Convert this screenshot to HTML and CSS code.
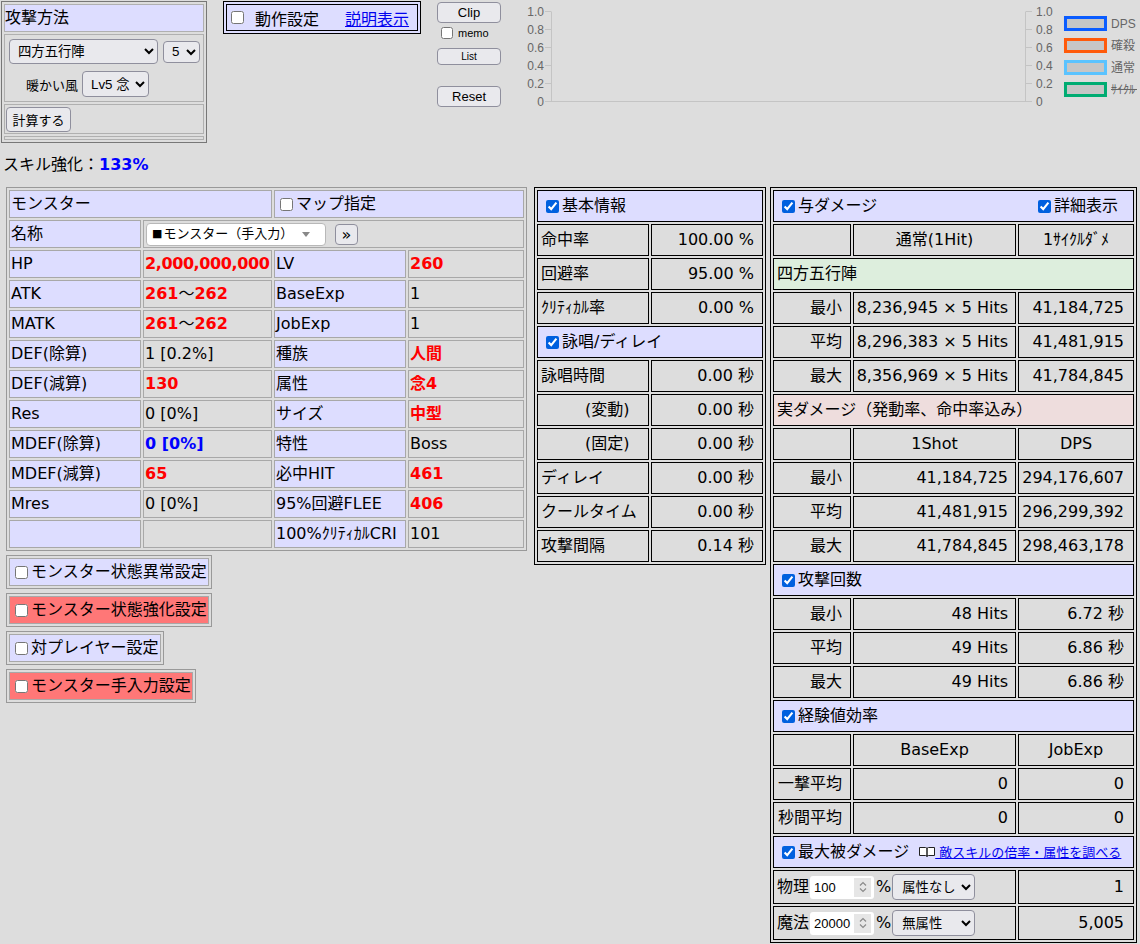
FILE: index.html
```html
<!DOCTYPE html>
<html lang="ja">
<head>
<meta charset="UTF-8">
<meta name="viewport" content="width=device-width, initial-scale=1.0">
<title>ダメージ計算</title>
<link rel="stylesheet" href="styles.css">
</head>
<body>

<div class="top">
    <table class="atk">
        <tr class="r-head"><td class="lav">攻撃方法</td></tr>
        <tr class="r-skill">
            <td class="skill-cell">
                <div class="skill-line">
                    <select class="sel sel-skill"><option>四方五行陣</option></select>
                    <select class="sel sel-lv"><option>5</option></select>
                </div>
                <div class="skill-line sub">
                    <span class="small">暖かい風</span>
                    <select class="sel sel-opt"><option>Lv5 念</option></select>
                </div>
            </td>
        </tr>
        <tr class="r-calc"><td><button class="btn btn-calc" type="button">計算する</button></td></tr>
        <tr class="r-blank"><td></td></tr>
    </table>

    <div class="setting-box">
        <div class="setting-inner">
            <input type="checkbox"><span class="setting-label">動作設定</span><a href="#" class="help-link">説明表示</a>
        </div>
    </div>

    <div class="tools">
        <button class="btn btn-clip" type="button">Clip</button>
        <label class="memo"><input type="checkbox">memo</label>
        <button class="btn btn-list" type="button">List</button>
        <button class="btn btn-reset" type="button">Reset</button>
    </div>

    <svg class="chart" width="620" height="110" viewBox="0 0 620 110">
        <g class="axis">
            <line x1="31.5" y1="11.5" x2="31.5" y2="102"/>
            <line x1="31" y1="101.5" x2="506" y2="101.5"/>
            <line x1="505.5" y1="11.5" x2="505.5" y2="102"/>
            <line x1="25" y1="11.5" x2="31" y2="11.5"/>
            <line x1="25" y1="29.5" x2="31" y2="29.5"/>
            <line x1="25" y1="47.5" x2="31" y2="47.5"/>
            <line x1="25" y1="65.5" x2="31" y2="65.5"/>
            <line x1="25" y1="83.5" x2="31" y2="83.5"/>
            <line x1="25" y1="101.5" x2="31" y2="101.5"/>
            <line x1="506" y1="11.5" x2="512" y2="11.5"/>
            <line x1="506" y1="29.5" x2="512" y2="29.5"/>
            <line x1="506" y1="47.5" x2="512" y2="47.5"/>
            <line x1="506" y1="65.5" x2="512" y2="65.5"/>
            <line x1="506" y1="83.5" x2="512" y2="83.5"/>
            <line x1="506" y1="101.5" x2="512" y2="101.5"/>
        </g>
        <g class="tick tick-l">
            <text x="24" y="16">1.0</text>
            <text x="24" y="34">0.8</text>
            <text x="24" y="52">0.6</text>
            <text x="24" y="70">0.4</text>
            <text x="24" y="88">0.2</text>
            <text x="24" y="106">0</text>
        </g>
        <g class="tick">
            <text x="516" y="16">1.0</text>
            <text x="516" y="34">0.8</text>
            <text x="516" y="52">0.6</text>
            <text x="516" y="70">0.4</text>
            <text x="516" y="88">0.2</text>
            <text x="516" y="106">0</text>
        </g>
        <g class="legend">
            <rect x="545.5" y="17.5" width="40" height="12" stroke="#0a5cff"/>
            <rect x="545.5" y="39.5" width="40" height="12" stroke="#ff5a0a"/>
            <rect x="545.5" y="61.5" width="40" height="12" stroke="#5ac3ff"/>
            <rect x="545.5" y="83.5" width="40" height="12" stroke="#00ac72"/>
            <text x="591" y="28">DPS</text>
            <text x="591" y="50">確殺</text>
            <text x="591" y="72">通常</text>
            <text x="591" y="94">ｻｲｸﾙ</text>
            <line class="strike" x1="591" y1="89.5" x2="617" y2="89.5"/>
        </g>
    </svg>
</div>

<div class="skill-up">スキル強化：<b class="blue">133%</b></div>

<div class="main">
    <div class="left">
        <table class="mon">
            <colgroup><col class="mc1"><col class="mc2"><col class="mc3"><col class="mc4"></colgroup>
            <tr><td colspan="2" class="lav">モンスター</td><td colspan="2" class="lav"><input type="checkbox">マップ指定</td></tr>
            <tr>
                <td class="lav">名称</td>
                <td colspan="3">
                    <span class="mon-select"><span class="sq">■</span>モンスター（手入力）<span class="tri"></span></span><button class="btn btn-more" type="button">»</button>
                </td>
            </tr>
            <tr><td class="lav">HP</td><td><b class="red tight">2,000,000,000</b></td><td class="lav">LV</td><td><b class="red">260</b></td></tr>
            <tr><td class="lav">ATK</td><td><b class="red">261</b>～<b class="red">262</b></td><td class="lav">BaseExp</td><td>1</td></tr>
            <tr><td class="lav">MATK</td><td><b class="red">261</b>～<b class="red">262</b></td><td class="lav">JobExp</td><td>1</td></tr>
            <tr><td class="lav">DEF(除算)</td><td>1 [0.2%]</td><td class="lav">種族</td><td><b class="red">人間</b></td></tr>
            <tr><td class="lav">DEF(減算)</td><td><b class="red">130</b></td><td class="lav">属性</td><td><b class="red">念4</b></td></tr>
            <tr><td class="lav">Res</td><td>0 [0%]</td><td class="lav">サイズ</td><td><b class="red">中型</b></td></tr>
            <tr><td class="lav">MDEF(除算)</td><td><b class="blue">0 [0%]</b></td><td class="lav">特性</td><td>Boss</td></tr>
            <tr><td class="lav">MDEF(減算)</td><td><b class="red">65</b></td><td class="lav">必中HIT</td><td><b class="red">461</b></td></tr>
            <tr><td class="lav">Mres</td><td>0 [0%]</td><td class="lav">95%回避FLEE</td><td><b class="red">406</b></td></tr>
            <tr><td class="lav"></td><td></td><td class="lav">100%ｸﾘﾃｨｶﾙCRI</td><td>101</td></tr>
        </table>

        <table class="opt"><tr><td class="lav"><input type="checkbox">モンスター状態異常設定</td></tr></table>
        <table class="opt"><tr><td class="alert"><input type="checkbox">モンスター状態強化設定</td></tr></table>
        <table class="opt"><tr><td class="lav"><input type="checkbox">対プレイヤー設定</td></tr></table>
        <table class="opt"><tr><td class="alert"><input type="checkbox">モンスター手入力設定</td></tr></table>
    </div>

    <table class="info mid">
        <colgroup><col class="w112"><col class="w112"></colgroup>
        <tr><td colspan="2" class="lav hd"><input type="checkbox" checked>基本情報</td></tr>
        <tr><td>命中率</td><td class="num">100.00 %</td></tr>
        <tr><td>回避率</td><td class="num">95.00 %</td></tr>
        <tr><td>ｸﾘﾃｨｶﾙ率</td><td class="num">0.00 %</td></tr>
        <tr><td colspan="2" class="lav hd"><input type="checkbox" checked>詠唱/ディレイ</td></tr>
        <tr><td>詠唱時間</td><td class="num">0.00 秒</td></tr>
        <tr><td class="ind">(変動)</td><td class="num">0.00 秒</td></tr>
        <tr><td class="ind">(固定)</td><td class="num">0.00 秒</td></tr>
        <tr><td>ディレイ</td><td class="num">0.00 秒</td></tr>
        <tr><td>クールタイム</td><td class="num">0.00 秒</td></tr>
        <tr><td>攻撃間隔</td><td class="num">0.14 秒</td></tr>
    </table>

    <table class="info dmg">
        <colgroup><col class="dc1"><col class="dc2"><col class="dc3"></colgroup>
        <tr>
            <td colspan="3" class="lav hd">
                <div class="split">
                    <span><input type="checkbox" checked>与ダメージ</span>
                    <span><input type="checkbox" checked>詳細表示</span>
                </div>
            </td>
        </tr>
        <tr><td></td><td class="c">通常(1Hit)</td><td class="c">1ｻｲｸﾙﾀﾞﾒ</td></tr>
        <tr><td colspan="3" class="green">四方五行陣</td></tr>
        <tr><td class="num">最小</td><td class="num n2">8,236,945 × 5 Hits</td><td class="num n3">41,184,725</td></tr>
        <tr><td class="num">平均</td><td class="num n2">8,296,383 × 5 Hits</td><td class="num n3">41,481,915</td></tr>
        <tr><td class="num">最大</td><td class="num n2">8,356,969 × 5 Hits</td><td class="num n3">41,784,845</td></tr>
        <tr><td colspan="3" class="pink">実ダメージ（発動率、命中率込み）</td></tr>
        <tr><td></td><td class="c">1Shot</td><td class="c">DPS</td></tr>
        <tr><td class="num">最小</td><td class="num n2">41,184,725</td><td class="num n3">294,176,607</td></tr>
        <tr><td class="num">平均</td><td class="num n2">41,481,915</td><td class="num n3">296,299,392</td></tr>
        <tr><td class="num">最大</td><td class="num n2">41,784,845</td><td class="num n3">298,463,178</td></tr>
        <tr><td colspan="3" class="lav hd"><input type="checkbox" checked>攻撃回数</td></tr>
        <tr><td class="num">最小</td><td class="num n2">48 Hits</td><td class="num n3">6.72 秒</td></tr>
        <tr><td class="num">平均</td><td class="num n2">49 Hits</td><td class="num n3">6.86 秒</td></tr>
        <tr><td class="num">最大</td><td class="num n2">49 Hits</td><td class="num n3">6.86 秒</td></tr>
        <tr><td colspan="3" class="lav hd"><input type="checkbox" checked>経験値効率</td></tr>
        <tr><td></td><td class="c">BaseExp</td><td class="c">JobExp</td></tr>
        <tr><td class="num">一撃平均</td><td class="num n2">0</td><td class="num n3">0</td></tr>
        <tr><td class="num">秒間平均</td><td class="num n2">0</td><td class="num n3">0</td></tr>
        <tr>
            <td colspan="3" class="lav hd">
                <input type="checkbox" checked>最大被ダメージ<a href="#" class="skill-link"><svg class="book" width="16" height="10" viewBox="0 0 16 10"><path d="M0.5 0.5H6.5Q8 0.5 8 2V9.5Q8 8.5 6.5 8.5H0.5Z M15.5 0.5H9.5Q8 0.5 8 2V9.5Q8 8.5 9.5 8.5H15.5Z" fill="#fff" stroke="#222" stroke-width="1"/></svg> 敵スキルの倍率・属性を調べる</a>
            </td>
        </tr>
        <tr class="r-in">
            <td colspan="2" class="in-cell">物理<span class="num-box"><input class="num-in" type="text" value="100"><span class="spin"><svg width="8" height="14" viewBox="0 0 8 14"><path d="M1 5.5L4 2.5L7 5.5M1 8.5L4 11.5L7 8.5" fill="none" stroke="#8a8a8a" stroke-width="1.2"/></svg></span></span><span class="pct">%</span><select class="sel sel-elem"><option>属性なし</option></select></td>
            <td class="num n3">1</td>
        </tr>
        <tr class="r-in">
            <td colspan="2" class="in-cell">魔法<span class="num-box"><input class="num-in" type="text" value="20000"><span class="spin"><svg width="8" height="14" viewBox="0 0 8 14"><path d="M1 5.5L4 2.5L7 5.5M1 8.5L4 11.5L7 8.5" fill="none" stroke="#8a8a8a" stroke-width="1.2"/></svg></span></span><span class="pct">%</span><select class="sel sel-elem"><option>無属性</option></select></td>
            <td class="num n3">5,005</td>
        </tr>
    </table>
</div>

</body>
</html>
```

FILE: styles.css
```css
body {
    margin: 0;
    background-color: #dddddd;
    font-family: "DejaVu Sans", "Noto Sans CJK JP", sans-serif;
    font-size: 16px;
    color: #000;
}

table {
    border-collapse: separate;
    border-spacing: 2px;
}

td {
    padding: 0 1px;
    white-space: nowrap;
}

.lav {
    background-color: #ddddff;
}

.green {
    background-color: #ddeedd;
}

.pink {
    background-color: #eedddd;
}

.alert {
    background-color: #ff7777;
}

.red {
    color: #ff0000;
}

.blue {
    color: #0000ff;
}

.tight {
    letter-spacing: -0.4px;
}

input[type="checkbox"] {
    width: 13px;
    height: 13px;
    margin: 0 3px 0 4px;
    vertical-align: middle;
    accent-color: #0060df;
}

.sel,
.btn,
.num-in {
    font-family: "Liberation Sans", "Noto Sans CJK JP", sans-serif;
    color: #000;
}

.sel {
    font-size: 13.33px;
    background-color: #e9e9ed;
    border: 1px solid #8f8f9d;
    border-radius: 4px;
    padding: 0 0 0 4px;
}

.btn {
    font-size: 13px;
    background-color: #e9e9ed;
    border: 1px solid #8f8f9d;
    border-radius: 4px;
    padding: 0;
    cursor: pointer;
}

/* top area */
.top {
    display: flex;
    align-items: flex-start;
}

.atk {
    width: 206px;
    margin: 1px 0 0 1px;
    border: 1px solid #777;
    table-layout: fixed;
}

.atk td {
    border: 1px solid #b0b0b0;
    padding: 0;
}

.atk .r-head {
    height: 28px;
}

.atk .r-head td {
    line-height: 24px;
}

.atk .r-skill {
    height: 68px;
}

.atk .r-calc {
    height: 30px;
}

.atk .r-blank {
    height: 4px;
}

.skill-cell {
    vertical-align: top;
}

.skill-line {
    display: flex;
    align-items: center;
    gap: 5px;
    margin-top: 4px;
    padding-left: 4px;
}

.skill-line.sub {
    margin-top: 7px;
    padding-left: 21px;
    gap: 4px;
}

.small {
    font-size: 13px;
}

.sel-skill {
    width: 149px;
    height: 25px;
}

.sel-lv {
    width: 37px;
    height: 22px;
}

.sel-opt {
    width: 67px;
    height: 26px;
}

.btn-calc {
    width: 65px;
    height: 25px;
    margin-left: 1px;
    font-family: "DejaVu Sans", "Noto Sans CJK JP", sans-serif;
}

.setting-box {
    margin: 1px 0 0 16px;
    border: 1px solid #000;
    padding: 2px;
    background-color: #ddddff;
}

.setting-inner {
    display: flex;
    align-items: center;
    height: 25px;
    padding-right: 8px;
    border: 1px solid #000;
    background-color: #ddddff;
}

.setting-label {
    margin-left: 8px;
}

.help-link {
    margin-left: 26px;
    color: #0000ee;
}

.tools {
    display: flex;
    flex-direction: column;
    width: 64px;
    margin: 2px 0 0 16px;
}

.btn-clip {
    height: 21px;
}

.memo {
    display: flex;
    align-items: center;
    height: 12px;
    margin-top: 4px;
    font-family: "Liberation Sans", sans-serif;
    font-size: 11px;
}

.memo input[type="checkbox"] {
    width: 12px;
    height: 12px;
    margin: 0 5px 0 4px;
}

.btn-list {
    height: 17px;
    margin-top: 9px;
    font-size: 10px;
}

.btn-reset {
    height: 21px;
    margin-top: 21px;
}

.chart {
    display: block;
    margin-left: 19px;
}

.chart .axis line {
    stroke: #c4c4c4;
    stroke-width: 1;
}

.chart text {
    font-family: "Liberation Sans", "Noto Sans CJK JP", sans-serif;
    font-size: 12px;
    fill: #666;
}

.chart .tick-l text {
    text-anchor: end;
}

.chart .legend rect {
    fill: #c6c6c6;
    stroke-width: 3;
}

.chart .strike {
    stroke: #666;
    stroke-width: 1;
}

.skill-up {
    height: 44px;
    line-height: 44px;
    padding-left: 3px;
}

/* main area */
.main {
    display: flex;
    align-items: flex-start;
    padding-left: 6px;
}

.left {
    width: 521px;
}

.mon {
    width: 521px;
    table-layout: fixed;
    border: 1px solid #999;
}

.mon td {
    border: 1px solid #a8a8a8;
    line-height: 22px;
}

.mon tr {
    height: 28px;
}

.mc1 { width: 132px; }
.mc2 { width: 129px; }
.mc3 { width: 132px; }
.mc4 { width: 116px; }

.mon-select {
    display: inline-flex;
    align-items: center;
    box-sizing: border-box;
    width: 180px;
    height: 23px;
    margin-left: 1px;
    padding-left: 5px;
    border: 1px solid #b8b8b8;
    border-radius: 4px;
    background-color: #fff;
    font-size: 13px;
    vertical-align: middle;
}

.sq {
    font-size: 11px;
    margin-right: 1px;
}

.tri {
    margin: 0 15px 0 auto;
    border-left: 4.5px solid transparent;
    border-right: 4.5px solid transparent;
    border-top: 5px solid #888;
}

.btn-more {
    width: 23px;
    height: 21px;
    margin-left: 9px;
    font-family: "DejaVu Sans", sans-serif;
    font-size: 16px;
    line-height: 17px;
    vertical-align: middle;
}

.opt {
    margin-top: 4px;
    border: 1px solid #999;
}

.opt td {
    border: 1px solid #a8a8a8;
    height: 26px;
    line-height: 22px;
}

.info {
    table-layout: fixed;
    border: 1px solid #000;
}

.info td {
    border: 1px solid #000;
    padding: 0 3px;
    line-height: 22px;
}

.info tr {
    height: 32px;
}

.info .hd {
    padding-left: 4px;
}

.info .num {
    text-align: right;
    padding-right: 8px;
}

.info .n2 {
    padding: 0 7px 0 1px;
}

.info .n3 {
    padding: 0 9px 0 1px;
}

.info .c {
    text-align: center;
}

.info .ind {
    padding-left: 47px;
}

.mid {
    width: 232px;
    margin-left: 7px;
}

.w112 { width: 112px; }

.dmg {
    width: 367px;
    margin-left: 4px;
}

.dc1 { width: 78px; }
.dc2 { width: 163px; }
.dc3 { width: 116px; }

.split {
    display: flex;
    justify-content: space-between;
    padding-right: 12px;
}

.skill-link {
    margin-left: 10px;
    font-size: 13px;
    color: #0000ee;
}

.book {
    vertical-align: 0;
}

.info .r-in {
    height: 34px;
}

.in-cell {
    font-size: 16px;
}

.num-box {
    display: inline-flex;
    align-items: center;
    box-sizing: border-box;
    width: 64px;
    height: 23px;
    margin-left: 1px;
    border-radius: 3px;
    background-color: #fff;
    vertical-align: middle;
}

.num-in {
    width: 40px;
    border: none;
    padding: 0 0 0 4px;
    background: transparent;
    font-size: 13px;
}

.spin {
    display: flex;
    align-items: center;
    justify-content: center;
    width: 18px;
    height: 19px;
    margin-left: auto;
    margin-right: 3px;
    background-color: #e6e6e6;
}

.pct {
    margin-left: 2px;
    vertical-align: middle;
}

.sel-elem {
    width: 83px;
    height: 26px;
    margin-left: 1px;
    padding-left: 5px;
    vertical-align: middle;
}
```
